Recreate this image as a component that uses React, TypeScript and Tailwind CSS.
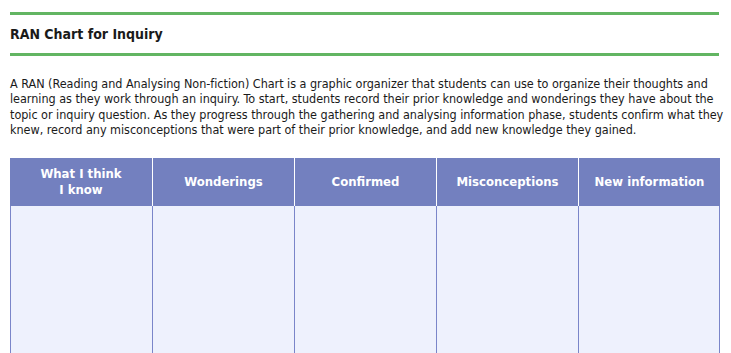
import React from 'react';

const columns = ['What I think|I know', 'Wonderings', 'Confirmed', 'Misconceptions', 'New information'];

const intro = [
  'A RAN (Reading and Analysing Non-fiction) Chart is a graphic organizer that students can use to organize their thoughts and',
  'learning as they work through an inquiry. To start, students record their prior knowledge and wonderings they have about the',
  'topic or inquiry question. As they progress through the gathering and analysing information phase, students confirm what they',
  'knew, record any misconceptions that were part of their prior knowledge, and add new knowledge they gained.',
];

const App = () => {
  return (
    <div
      className="w-[731px] h-[353px] overflow-hidden bg-white text-[#1a1a1a]"
      style={{ fontFamily: '"DejaVu Sans Condensed", "DejaVu Sans", sans-serif' }}
    >
      <div className="pl-[10px] pr-[12px] pt-[12px]">
        {/* Title band */}
        <div className="border-t-[3px] border-b-[3px] border-[#62b562] h-[44px] flex items-center">
          <h1 className="text-[14px] font-bold leading-none">RAN Chart for Inquiry</h1>
        </div>

        <p className="mt-[20px] text-[12.5px] leading-[15.3px] tracking-[-0.03px] whitespace-nowrap">
          {intro.map((line) => (
            <span key={line} className="block">{line}</span>
          ))}
        </p>

        {/* Chart */}
        <div className="mt-[21px] w-[710px] grid grid-cols-5">
          {columns.map((col, i) => (
            <div
              key={col}
              className={`h-[48px] bg-[#7380bf] flex flex-col items-center justify-center text-center px-3 text-white font-bold text-[13px] leading-[16px] ${i > 0 ? 'border-l border-white' : ''}`}
            >
              {col.split('|').map((line) => (
                <span key={line}>{line}</span>
              ))}
            </div>
          ))}
          {columns.map((col, i) => (
            <div
              key={col + '-body'}
              className={`h-[160px] bg-[#eef1fd] border-l border-[#7a85c9] ${i === columns.length - 1 ? 'border-r' : ''}`}
            />
          ))}
        </div>
      </div>
    </div>
  );
};

export default App;
